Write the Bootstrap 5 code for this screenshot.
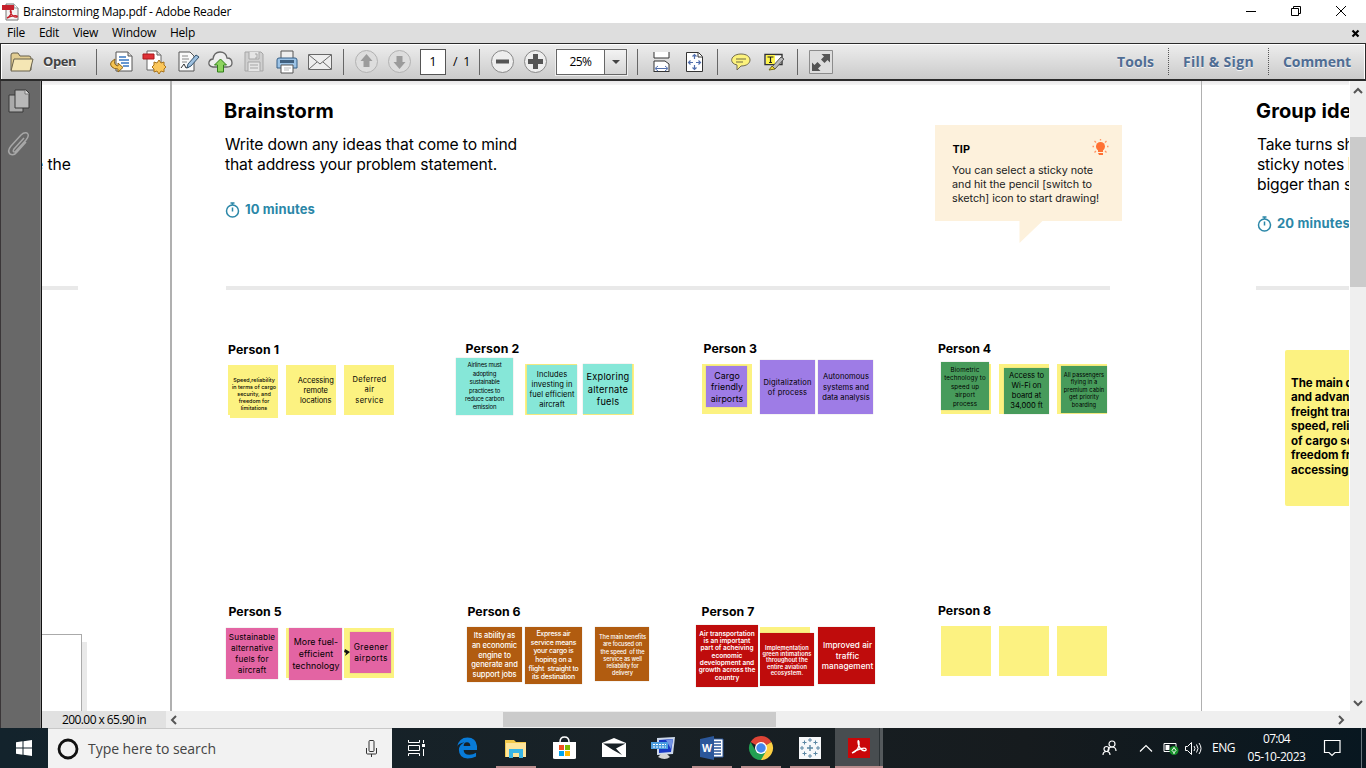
<!DOCTYPE html>
<html lang="en">
<head>
<meta charset="utf-8">
<title>Brainstorming Map.pdf - Adobe Reader</title>
<link href="https://cdn.jsdelivr.net/npm/bootstrap@5.3.0/dist/css/bootstrap.min.css" rel="stylesheet">
<script src="https://cdn.jsdelivr.net/npm/bootstrap@5.3.0/dist/js/bootstrap.bundle.min.js"></script>
<style>
body{width:1366px;height:768px;font-family:"Open Sans","Noto Sans",sans-serif;font-size:12px;color:#000;line-height:1}
svg{display:block;flex:none;overflow:visible}
[data-fit]{white-space:pre}
.titlebar{height:23px;padding:0 0 0 2px}
.wincontrols{padding-right:20px}
.wincontrols svg{margin-left:35px;margin-top:-2px}
.menubar{height:20px;background:#dedede;padding-left:7px;padding-right:7px}
.toolstrip{height:38px;border:1px solid #2b2b2b;border-width:1px 1px 2px 1px;background:linear-gradient(#ededed,#cbcbcb);box-shadow:inset 0 1px #fff,inset 1px 0 #fff,inset -1px 0 #fff}
.cell{width:33px;display:flex;justify-content:center;align-items:center}
.vr-line{width:1px;height:26px;background:#666;flex:none}
.dotline{width:1px;height:27px;background:repeating-linear-gradient(#555 0 1px,transparent 1px 2px);flex:none}
.task-link{font:bold 14px "Open Sans",sans-serif;color:#4f6d94;text-shadow:0 1px #f5f5f5}
.pagebox{width:26px;height:26px;border:1px solid #555;font-size:13px;background:#fff}
.zoombox{width:71px;height:26px;border:1px solid #666;background:#fff;box-shadow:0 0 0 1px #eee}
.zoomarrow{width:22px;border-left:1px solid #666;background:linear-gradient(#f3f3f3,#d5d5d5)}
.middle{height:647px}
.navpane{width:42px;background:#686868;border-left:1px solid #3a3638;border-right:1px solid #111;box-shadow:inset -1px 0 #8a8a8a;padding:8px 0 0 7px}
.viewer{width:1308px}
.paper{height:630px;width:1307px;background:#fff}
.board{left:-42px;top:-81px;width:1366px;height:768px}
.board>*{position:absolute}
.nova{font-family:Inter,sans-serif;white-space:pre}
.h-big{font-size:20px;font-weight:700;line-height:24px}
.para{font-size:15.700px;line-height:20px}
.mins{font-size:13px;font-weight:700;line-height:16px;color:#2b87a8}
.plabel{font:700 12.300px/16px Inter,sans-serif;white-space:pre}
.rule-line{height:4px;background:#e9e9e9}
.frame-edge{width:2px;background:#b0b0b0}
.tipbox{background:#fdf1dc}
.tiptext{font-size:10.800px;line-height:14px;color:#222}
.ntext{left:0;white-space:pre;text-align:center;font-family:Inter,sans-serif}
.n-y{background:#fcf281}.n-t{background:#86e7d8}.n-p{background:#9e7ce6}.n-g{background:#479b5b}
.n-k{background:#e364a3}.n-b{background:#b15c10;color:#fff}.n-r{background:#bf0c0c;color:#fff}
.edge{box-shadow:0 0 1px rgba(150,130,120,.5)}
.statusbar{height:17px;background:#efefef}
.pagesize{width:124px;background:#e1e1e1;padding-left:20px}
.hthumb{width:273px;height:15px;background:#cbcbcb}
.vscroll{width:16px;background:#efefef}
.vthumb{height:150px;background:#cbcbcb}
.taskbar{height:40px;background:linear-gradient(90deg,#13232c,#182126 45%,#161b1e 75%,#081720)}
.searchbox{width:344px;background:#f2f2f2;border-top:1px solid #c8c8c8}
.slot{width:49px;position:relative;display:flex;align-items:center;justify-content:center}
.running::after{content:"";position:absolute;bottom:0;left:4px;width:40px;height:2px;background:#ba8e8e}
.current{background:linear-gradient(90deg,#484d50 44px,#2c3235 44px 45px,#54595c 45px 48px,transparent 48px)}
.current::after{left:0;width:48px}
.tray{color:#fff}
</style>
</head>
<body class="overflow-hidden bg-white d-flex flex-column">
<header class="titlebar d-flex align-items-center">
  <svg width="17" height="18" viewBox="0 0 17 18"><path d="M4 1h8l4 4v12H4z" fill="#f3f3f3" stroke="#777"/><path d="M12 1v4h4" fill="#fff" stroke="#999"/><path d="M0 2h12v5H0z" fill="#c5202b"/><path d="M5 15c3-1 5-5 4-7s-1 3 2 5 5 1 4 0-6 0-10 2" fill="none" stroke="#c5202b" stroke-width="1.4"/></svg>
  <span class="ms-1" data-fit="208">Brainstorming Map.pdf - Adobe Reader</span>
  <div class="wincontrols d-flex ms-auto align-items-center">
    <svg width="10" height="10"><path d="M0 5.5h10" stroke="#000"/></svg>
    <svg width="10" height="10" fill="none" stroke="#000"><path d="M.5 2.5h7v7h-7zM2.500 2V.5h7v7H8"/></svg>
    <svg width="10" height="10" stroke="#000"><path d="M0 0l10 10M10 0L0 10"/></svg>
  </div>
</header>
<nav class="menubar d-flex align-items-center">
  <span data-fit="18">File</span><span style="margin-left:14px" data-fit="20">Edit</span><span style="margin-left:14px" data-fit="25">View</span><span style="margin-left:14px" data-fit="44">Window</span><span style="margin-left:14px" data-fit="25">Help</span>
  <svg class="ms-auto" width="7" height="7" stroke="#000" stroke-width="2.2"><path d="M.5.5l6 6M6.500.5l-6 6"/></svg>
</nav>
<div class="toolstrip d-flex align-items-center">
  <svg style="margin-left:9px" width="24" height="20" viewBox="0 0 24 20"><path d="M1 18V3q0-2 2-2h5l2 3h9q2 0 2 2v12z" fill="#e2cd92" stroke="#67604c"/><path d="M4 7h19l-3 12H1z" fill="#f5e6b4" stroke="#67604c"/></svg>
  <span class="fw-bold" style="margin-left:9px;color:#444;font-size:13px;text-shadow:0 1px #fff" data-fit="33">Open</span>
  <i class="vr-line" style="margin-left:20px"></i>
  <div class="d-flex" style="margin-left:8px">
    <div class="cell"><svg width="23" height="22"><path d="M6 1h12l4 4v15H6z" fill="#fff" stroke="#555"/><path d="M18 1v4h4" fill="#ddd" stroke="#555"/><path d="M9 6h7M9 9h10M11 12h8M13 15h6" stroke="#3977c1" stroke-width="1.3"/><path d="M5 8q-7 4-3 8 2 2 6 2v3l5-4.500L8 12v3q-5-1-3-7" fill="#f5c453" stroke="#8d6419"/></svg></div>
    <div class="cell"><svg width="23" height="24"><path d="M4 1h10l4 4v15H4z" fill="#fff" stroke="#666"/><path d="M14 1v4h4" fill="#ddd" stroke="#666"/><path d="M0 4h11v5H0z" fill="#df3036" stroke="#a9191d"/><path d="M16 10l2 3 3-1v3l2 2-2 2v3l-3-1-2 3-2-3-3 1v-3l-2-2 2-2v-3l3 1z" fill="#fbc75b" stroke="#a7731c"/></svg></div>
    <div class="cell"><svg width="22" height="22"><path d="M2 1h11l4 4v15H2z" fill="#f9f9f9" stroke="#555"/><path d="M5 5h6M5 8h7M5 11h5" stroke="#888"/><path d="M4 17l3-4 2 4 3-1" stroke="#333" fill="none"/><path d="M11 13l8-9 3 2-8 9-4 2z" fill="#9ec0df" stroke="#34536e"/></svg></div>
    <div class="cell"><svg width="25" height="22"><path d="M5 16q-5-1-4-5 1-3 4-3 1-7 7-7 6 0 7 6 5 0 5 5 0 4-5 4z" fill="#eee" stroke="#666" stroke-width="1.3"/><path d="M12.500 8l6 6h-3v7h-6v-7h-3z" fill="#8ed45f" stroke="#31801a"/></svg></div>
    <div class="cell"><svg width="20" height="21" fill="none" stroke="#a5a5a5"><path d="M1 1h16l2 2v17H1z" fill="#d0d0d0"/><path d="M5 1v7h10V1M4 20v-9h12v9" fill="#e5e5e5"/><path d="M11 3h2v4h-2M6 14h8M6 17h8"/></svg></div>
    <div class="cell"><svg width="22" height="24"><path d="M5 1h12v9H5z" fill="#eee" stroke="#555"/><path d="M1 10q0-2 2-2h16q2 0 2 2v8H1z" fill="#9cc3e6" stroke="#345e86"/><path d="M4 10h14v3H4z" fill="#416180"/><path d="M5 15h12v8H5z" fill="#fff" stroke="#555"/><path d="M8 18h7M8 20h5" stroke="#bbb"/></svg></div>
    <div class="cell"><svg width="24" height="16" fill="none" stroke="#686868"><path d="M.5.5h23v15H.5z" fill="#eee"/><path d="M1 1l11 9L23 1M1 15l8-7M23 15l-8-7"/></svg></div>
  </div>
  <i class="vr-line" style="margin-left:7px"></i>
  <div class="d-flex" style="margin-left:6px">
    <div class="cell"><svg width="23" height="23"><circle cx="11.500" cy="11.500" r="11" fill="#ddd" stroke="#b2b2b2"/><path d="M11.500 4l6 7h-3v6h-6v-6h-3z" fill="#9b9b9b"/></svg></div>
    <div class="cell"><svg width="23" height="23"><circle cx="11.500" cy="11.500" r="11" fill="#ddd" stroke="#b2b2b2"/><path d="M11.500 19l6-7h-3V6h-6v6h-3z" fill="#9b9b9b"/></svg></div>
  </div>
  <div class="pagebox d-flex align-items-center justify-content-center" style="margin-left:4px">1</div>
  <span style="margin-left:7px;font-size:12.500px;padding-top:1px" data-fit="17">/  1</span>
  <i class="vr-line" style="margin-left:9px"></i>
  <div class="d-flex" style="margin-left:6px">
    <div class="cell"><svg width="23" height="23"><circle cx="11.500" cy="11.500" r="11" fill="#eee" stroke="#888"/><path d="M5 9.500h13v4H5z" fill="#555"/></svg></div>
    <div class="cell"><svg width="23" height="23"><circle cx="11.500" cy="11.500" r="11" fill="#eee" stroke="#888"/><path d="M9 4h5v5h5v5h-5v5H9v-5H4V9h5z" fill="#555"/></svg></div>
  </div>
  <div class="zoombox d-flex" style="margin-left:4px"><span class="flex-fill text-center align-self-center"><span data-fit="22">25%</span></span><div class="zoomarrow d-flex align-items-center justify-content-center"><svg width="8" height="4"><path d="M0 0h8L4 4z" fill="#444"/></svg></div></div>
  <i class="vr-line" style="margin-left:10px"></i>
  <div class="d-flex" style="margin-left:7px">
    <div class="cell"><svg width="18" height="20" fill="none" stroke="#333"><path d="M1 0v6h15V0M1 20V9h11l4 3v8" fill="#fff"/><path d="M1 19.500h15"/><path d="M3 16.500h11M5 14l-3 2.500L5 19M12 14l3 2.500-3 2.500" stroke="#526fad"/></svg></div>
    <div class="cell"><svg width="17" height="20" fill="none"><path d="M.5.5h12l4 4v15H.5z" fill="#fff" stroke="#333"/><path d="M12 1v4h4" stroke="#333"/><path d="M8.500 3v4M8.500 13v4M3 10.500h4M10 10.500h4M6.500 4.500l2-2 2 2M6.500 15.500l2 2 2-2M4.500 8.500l-2 2 2 2M12.500 8.500l2 2-2 2" stroke="#526fad" stroke-width="1.200"/></svg></div>
  </div>
  <i class="vr-line" style="margin-left:6px"></i>
  <div class="d-flex" style="margin-left:6px">
    <div class="cell"><svg width="20" height="18"><path d="M10 1c12 0 12 12 0 12l-4 4v-5C-3 10 0 1 10 1z" fill="#fcf27c" stroke="#716b50"/><path d="M5 6h10M5 9h7" stroke="#6f6b43"/></svg></div>
    <div class="cell"><svg width="20" height="18"><path d="M1 1.500h17v10H1z" fill="#fff" stroke="#333" stroke-width="1.4"/><path d="M2 2h9v9H2z" fill="#fff54b"/><path d="M3.500 4h6M6.500 4v6M5 9.500h3" stroke="#222" stroke-width="1.2"/><path d="M8 14L17 4l3 2-9 10z" fill="#bbb" stroke="#555"/><path d="M5 17l3-4 3 3z" fill="#f3da39" stroke="#746a18"/></svg></div>
  </div>
  <i class="vr-line" style="margin-left:7px"></i>
  <svg style="margin-left:11px" width="24" height="24"><path d="M.5.5h23v23H.5z" fill="#dedede" stroke="#8c8c8c"/><path d="M12.500 4H21v8.500l-2.500-2.500-3 3-3.500-3.500 3-3zM3 12.500l2.500 2.500 3-3L12 15.500l-3 3 2.500 2.500H3z" fill="#555"/></svg>
  <div class="d-flex align-items-center ms-auto" style="padding-right:14px">
    <span class="task-link" data-fit="37">Tools</span><i class="dotline" style="margin:0 14px"></i><span class="task-link" data-fit="71">Fill &amp; Sign</span><i class="dotline" style="margin:0 14px"></i><span class="task-link" data-fit="68">Comment</span>
  </div>
</div>
<div class="middle d-flex">
  <aside class="navpane d-flex flex-column">
    <svg width="22" height="24" fill="#aaa" stroke="#393939"><path d="M1 6h14v17H1z"/><path d="M7 1h11l3 3v15H7z" fill="#b8b8b8"/><path d="M17 1v4h4" fill="#ddd" stroke="#777"/></svg>
    <svg style="margin-top:19px" width="22" height="24" fill="none" stroke="#a7a7a7" stroke-width="1.5"><path d="M16 6L6 17q-2 3 1 3L18 8q4-5 1-7-3-1-6 2L3 14q-4 5-1 8 4 2 7-2l9-10"/></svg>
  </aside>
  <main class="viewer d-flex flex-column bg-white">
    <div class="paper position-relative overflow-hidden"><div class="board position-absolute" id="board">
      <div style="left:42px;top:81px;width:1308px;height:4px;background:linear-gradient(#e9e7e9,#f5f5f5)"></div>
      <div class="frame-edge" style="left:170px;top:81px;height:630px"></div>
      <div class="frame-edge" style="left:1201px;top:81px;height:630px;width:1px"></div>
      <div style="left:82px;top:642px;width:5px;height:69px;background:#e9e9e9"></div>
      <div style="left:20px;top:634px;width:62px;height:90px;border:1px solid #aaa;background:#fff"></div>
      <div class="rule-line" style="left:42px;top:286px;width:36px"></div>
      <div class="rule-line" style="left:226px;top:286px;width:884px"></div>
      <div class="rule-line" style="left:1256px;top:286px;width:100px"></div>
      <div class="nova para" style="left:34px;top:155px" data-fit="37">e the</div>
      <div class="nova h-big" style="left:224px;top:99px" data-fit="110">Brainstorm</div>
      <div class="nova para" style="left:225px;top:135px" data-fit="292">Write down any ideas that come to mind</div>
      <div class="nova para" style="left:225px;top:155px" data-fit="272">that address your problem statement.</div>
      <svg style="left:225px;top:202px" width="15" height="16" fill="none" stroke="#2b87a8" stroke-width="1.5"><circle cx="7.500" cy="9" r="6"/><path d="M5.500 1h4M7.500 1v2M7.500 5.500v4"/></svg>
      <div class="nova mins" style="left:245px;top:201px" data-fit="70">10 minutes</div>
      <div class="tipbox" style="left:935.400px;top:125.400px;width:187px;height:96px"></div>
      <svg style="left:1019px;top:221px" width="24" height="22"><path d="M.5 0h23L.5 22z" fill="#fdf1dc"/></svg>
      <div class="nova tiptext fw-bold text-black" style="left:952.500px;top:143px" data-fit="17.5">TIP</div>
      <svg style="left:1092px;top:139px" width="17" height="17" fill="#ff7133"><circle cx="8.500" cy="7.500" r="4.500"/><path d="M6 10h5v3H6zM6 14h5v2H7z"/><path d="M8.500 0v1.500M2.500 2l1.500 1.500M14.500 2L13 3.500M.5 7.500h1.500M15 7.500h1.500M2.500 13.500L4 12M14.500 13.500L13 12" stroke="#ff9565" stroke-width="1.3"/></svg>
      <div class="nova tiptext" style="left:952px;top:164px" data-fit="141">You can select a sticky note</div>
      <div class="nova tiptext" style="left:952px;top:178px" data-fit="140">and hit the pencil [switch to</div>
      <div class="nova tiptext" style="left:952px;top:192px" data-fit="147">sketch] icon to start drawing!</div>
      <div class="nova h-big" style="left:1256px;top:99px" data-fit="119">Group ideas</div>
      <div class="nova para" style="left:1257px;top:135px" data-fit="133">Take turns sharing</div>
      <div class="nova para" style="left:1257px;top:155px" data-fit="87">sticky notes</div>
      <div class="nova para" style="left:1257px;top:175px" data-fit="107">bigger than six</div>
      <div style="left:1348px;top:157px;width:2px;height:13px;background:#fdecb5"></div>
      <svg style="left:1257px;top:216px" width="15" height="16" fill="none" stroke="#2b87a8" stroke-width="1.5"><circle cx="7.500" cy="9" r="6"/><path d="M5.500 1h4M7.500 1v2M7.500 5.500v4"/></svg>
      <div class="nova mins" style="left:1277px;top:215px" data-fit="73">20 minutes</div>
      <div class="n-y" style="left:1285px;top:350px;width:70px;height:156px;border-radius:2px"></div>
      <div class="nova fw-bold" style="left:1291px;top:375.500px;font-size:11.500px;line-height:14.600px">The main drivers
and advantages
freight transport
speed, reliability
of cargo security
freedom from
accessing remote</div>
      <svg style="left:344px;top:649px;z-index:5" width="7" height="7"><path d="M1 0l5 3-5 4 1-3-2-1z" fill="#111"/></svg>
    </div></div>
    <footer class="statusbar d-flex align-items-center">
      <div class="pagesize h-100 d-flex align-items-center"><span data-fit="84">200.00 x 65.90 in</span></div>
      <svg style="margin-left:4px" width="7" height="8" fill="none" stroke="#555" stroke-width="2"><path d="M6 0L2 4l4 4"/></svg>
      <div class="hthumb" style="margin-left:326px"></div>
      <svg style="margin-left:562px" width="7" height="8" fill="none" stroke="#555" stroke-width="2"><path d="M1 0l4 4-4 4"/></svg>
    </footer>
  </main>
  <div class="vscroll d-flex flex-column">
    <svg style="margin:7px 4px 44px" width="8" height="5" fill="none" stroke="#555" stroke-width="2"><path d="M0 5l4-4 4 4"/></svg>
    <div class="vthumb"></div>
    <svg style="margin:414px 4px 0" width="8" height="5" fill="none" stroke="#555" stroke-width="2"><path d="M0 0l4 4 4-4"/></svg>
  </div>
</div>
<footer class="taskbar d-flex">
  <div class="d-flex align-items-center justify-content-center" style="width:48px"><svg width="16" height="16" fill="#fff"><path d="M0 2.200L6.500 1.300v6.200H0zM7.500 1.200L16 0v7.500H7.500zM0 8.500h6.500v6.200L0 13.800zM7.500 8.500H16V16l-8.500-1.200z"/></svg></div>
  <div class="searchbox d-flex align-items-center">
    <svg style="margin-left:9px" width="22" height="22"><circle cx="11" cy="11" r="9" fill="none" stroke="#111" stroke-width="2.800"/></svg>
    <span style="margin-left:9px;font-size:14px;color:#444" data-fit="128">Type here to search</span>
    <svg class="ms-auto" style="margin-right:15px" width="11" height="17" fill="none" stroke="#333"><rect x="3" y=".5" width="5" height="11" rx="1"/><path d="M.5 8v5q0 1 1 1h8q1 0 1-1V8M5.500 14v3"/></svg>
  </div>
  <div class="slot" style="margin-right:2px"><svg width="17" height="16" fill="none" stroke="#fff"><path d="M.5 0v2.500h11V0M.5 5.500h11v5H.5zM.5 16v-2.500h11V16M15.500 0v3M15.500 9v7"/><path d="M14 4h3v3h-3z" fill="#fff" stroke="none"/></svg></div>
  <div class="slot"><svg style="margin-right:2px" width="20" height="22" viewBox="0 0 21 22"><path d="M0 10Q2 0 11 0q9 0 10 9v4H7q0 5 6 5 4 0 7-2v4q-4 2-9 2-9-1-9-9 0-5 6-8-7 1-8 5zM7 9h7q0-4-3.500-4T7 9z" fill="#087bd8" fill-rule="evenodd"/></svg></div>
  <div class="slot running"><svg style="margin-right:1px" width="22" height="19"><path d="M0 1h9l2 2h10v15H0z" fill="#f2c84b"/><path d="M1 4h20v14H1z" fill="#fee59c"/><path d="M4 19v-9h14v9h-4v-5H8v5z" fill="#39b5e5"/></svg></div>
  <div class="slot"><svg style="margin-right:2px" width="23" height="24"><path d="M7 6q0-5 4.500-5T16 6" fill="none" stroke="#fff" stroke-width="1.500"/><path d="M0 6h23v16q0 1-2 1H2q-2 0-2-1z" fill="#fff"/><path d="M6 9h5v5H6z" fill="#f25022"/><path d="M12 9h5v5h-5z" fill="#7fba00"/><path d="M6 15h5v5H6z" fill="#00a4ef"/><path d="M12 15h5v5h-5z" fill="#ffb900"/></svg></div>
  <div class="slot"><svg style="margin-right:1px" width="24" height="20"><path d="M0 5l12-5 12 5v14H0z" fill="#fff"/><path d="M1 5.500h22.500L14 10.500l6 6.500-9-5z" fill="#182126"/></svg></div>
  <div class="slot"><svg style="margin-right:2px" width="24" height="23"><path d="M6 1l18-1-2 17-16 1z" fill="#cdd8ea"/><path d="M8 3l14-1-2 13-12 1z" fill="#1839c4"/><path d="M15 3l7-1-2 10z" fill="#7394e5"/><path d="M10 17h6l3 3q-5 4-12 0z" fill="#d4d4d4"/><path d="M0 5h17v7H0z" fill="#4c9de0"/><path d="M2 7.500h13M2 10h13" stroke="#fff" stroke-dasharray="2 1"/></svg></div>
  <div class="slot running"><svg style="margin-right:1px" width="24" height="24"><path d="M12 3h11v18H12z" fill="#fff" stroke="#2b579a"/><path d="M14 6h7M14 9h7M14 12h7M14 15h7M14 18h7" stroke="#2b579a" stroke-width="1.300"/><path d="M0 3l14-3v24L0 21z" fill="#2b579a"/><text x="2" y="16" font-family="Open Sans" font-weight="700" font-size="11" textLength="10" lengthAdjust="spacingAndGlyphs" fill="#fff">W</text></svg></div>
  <div class="slot running"><svg style="margin-right:1px" width="24" height="24" viewBox="0 0 24 24"><path d="M12 12L1.600 6A12 12 0 0 1 22.400 6z" fill="#de4436"/><path d="M12 12l10.400-6A12 12 0 0 1 12 24z" fill="#fdd043"/><path d="M12 12l5.200 3L12 24A12 12 0 0 1 1.600 6l5.200 9z" fill="#22a052"/><circle cx="12" cy="12" r="6" fill="#fff"/><circle cx="12" cy="12" r="4.700" fill="#4587ed"/></svg></div>
  <div class="slot running"><svg style="margin-right:2px" width="22" height="22"><path d="M0 0h22v22H0z" fill="#f7f8fa"/><g stroke="#5a86a3"><path d="M11 8v6M8 11h6" stroke-width="1.400"/><path d="M11 1v4M9 3h4M11 17v4M9 19h4M1 11h4M3 9v4M17 11h4M19 9v4M5.500 3.500v4M3.500 5.500h4M16.500 3.500v4M14.500 5.500h4M5.500 14.500v4M3.500 16.500h4M16.500 14.500v4M14.500 16.500h4"/></g></svg></div>
  <div class="slot running current"><svg style="margin-right:1px" width="22" height="20"><path d="M0 0h22v20H0z" fill="#c90709"/><path d="M4 15c5-1 8-7 7-11s-2 2 1 6 7 3 6 1-9 0-14 4" fill="none" stroke="#fff" stroke-width="1.300"/></svg></div>
  <div class="tray ms-auto d-flex align-items-center">
    <svg width="15" height="16" fill="none" stroke="#fff" stroke-width="1.200"><circle cx="10" cy="4" r="3"/><path d="M6 11q0-4 4-4t4 4"/><circle cx="4.500" cy="9" r="2.500"/><path d="M1 15q0-3.500 3.500-3.500T8 15"/></svg>
    <svg style="margin-left:23px" width="12" height="7" fill="none" stroke="#fff" stroke-width="1.200"><path d="M0 6.500l6-6 6 6"/></svg>
    <svg style="margin-left:11px" width="16" height="13"><path d="M1 1.500h12v8H1z" fill="none" stroke="#fff"/><path d="M2.500 3h4v5h-4z" fill="#fff"/><circle cx="11" cy="8.500" r="4.500" fill="#16912a"/><path d="M11 5.500l2 3-2 2-2-2zM11 10v2" fill="none" stroke="#fff"/></svg>
    <svg style="margin-left:6px" width="17" height="13" fill="none" stroke="#fff"><path d="M.5 4.500h2l4-4v12l-4-4h-2zM9 4q2 2.500 0 5M11.500 2.500q3 4 0 8M14 1q4 5.500 0 11"/></svg>
    <span style="margin-left:10px" data-fit="23">ENG</span>
    <div class="text-center" style="margin-left:12px;line-height:18px;width:59px"><span data-fit="27">07:04</span><br><span data-fit="58">05-10-2023</span></div>
    <svg style="margin-left:18px" width="17" height="16" fill="none" stroke="#fff" stroke-width="1.200"><path d="M.5.5h15.500v12H11l-3 3-3-3H.5z"/></svg>
    <i style="width:1px;height:40px;background:#68757c;margin:0 4px 0 20px"></i>
  </div>
</footer>
<script>
// left, top, width, height, colour, then optionally:
// font size, line height, centre y of first line, centre x, widest line, weight, lines
const notes=[
[228,365,50,50,'y'],[230,365,48,53,'y',5.4,7,380.4,254,44,500,'Speed,reliability|in terms of cargo|security, and|freedom for|limitations'],
[286,365,50,50,'y',7.5,9.7,381,315.7,36,400,'Accessing|remote|locations'],
[344,365,50,50,'y',7.5,10.5,380,369.5,34,400,'Deferred|air|service'],
[456.4,358,56.5,56.5,'t',6,8.4,365.500,484.5,39,400,'Airlines must|adopting|sustainable|practices to|reduce carbon|emission'],
[525,364,52,50.5,'y'],[527,365,50,49.4,'t',7.5,10,375,552,45,400,'Includes|investing in|fuel efficient|aircraft'],
[583,364,50.5,50.5,'y'],[583,364.4,49,49.5,'t',9.2,12.4,377.500,608,43,400,'Exploring|alternate|fuels'],
[702,364,50,50,'y'],[706,366,41,41,'p',8.8,11.6,375.500,727,32.5,400,'Cargo|friendly|airports'],
[760.4,360,54.5,54.4,'p',7.5,10,383,787.5,48,400,'Digitalization|of process'],
[818.4,360,54.5,54.4,'p',7.6,10.4,377.500,846,47.5,400,'Autonomous|systems and|data analysis'],
[941,364,50,50,'y'],[941,362,48,47.5,'g',6.2,8.5,370,965,41.5,400,'Biometric|technology to|speed up|airport|process'],
[999,364,50,50,'y'],[1004,368,45,45.5,'g',7.6,10,376.2,1026.5,35,400,'Access to|Wi-Fi on|board at|34,000 ft'],
[1057,364,50,50,'y'],[1061,366,46,47,'g',5.7,7.6,374.5,1084,40.5,400,'All passengers|flying in a|premium cabin|get priority|boarding'],
[226.4,628,51.5,51,'k',8.2,11,637.700,252,46.5,400,'Sustainable|alternative|fuels for|aircraft'],
[286,628,50,50,'y'],[289.4,628,53,52.4,'k',8.8,12,642.4,316,47,400,'More fuel-|efficient|technology'],
[344,628,50,50,'y'],[350,632,41,41,'k',8.4,11,647.700,371,34.5,400,'Greener|airports'],
[467,627,55,54.5,'b',7.5,9.6,636.2,494.5,46.5,500,'Its ability as|an economic|engine to|generate and|support jobs'],
[525,627,57.4,57,'b',6.9,8.6,634.600,553.5,50,500,'Express air|service means|your cargo is|hoping on a|flight  straight to|its destination'],
[595,627,54,53.5,'b',5.7,7.2,636.7,622.5,47,500,'The main benefits|are focused on|the speed  of the|service as well|reliability for|delivery'],
[696.4,624.5,61.4,62,'r',6.5,7.35,634.4,727,56.5,600,'Air transportation|is an important|part of acheiving|economic|development and|growth across the|country'],
[760,627,50,50,'y'],[760.4,633,53.5,53.4,'r',5.7,6.3,648,787,49,600,'Implementation|green intimations|throughout the|entire aviation|ecosystem.'],
[818.4,627,57,57,'r',8.2,10.5,645.500,847.5,51.5,500,'Improved air|traffic|management'],
[941,626,50,50,'y'],[999,626,50,50,'y'],[1057,626,50,50,'y']];
const labels=[[228,342,51],[465.5,341,54],[703.5,341,53.5],[938,341,53],[228.5,604,53],[467.5,604,53],[701.5,604,53],[938,603,53]];
const board=document.getElementById('board');
const place=(el,x,y)=>{el.style.left=x+'px';el.style.top=y+'px';board.append(el);return el};
const natural=el=>{const r=document.createRange();r.selectNodeContents(el);return r.getBoundingClientRect().width};
labels.forEach(([x,y,w],i)=>{
  const d=document.createElement('div');d.className='plabel';d.textContent='Person '+(i+1);d.dataset.fit=w;place(d,x,y)});
notes.forEach(([x,y,w,h,c,fs,lh,cy,cx,tw,wt,text])=>{
  const d=document.createElement('div');d.className='n-'+c+(c!='y'?' edge':'');
  place(d,x,y);d.style.width=w+'px';d.style.height=h+'px';
  if(!text)return;
  const t=document.createElement('div');t.className='ntext n-'+c;t.style.background='none';
  t.style.fontSize=fs+'px';t.style.lineHeight=lh+'px';t.style.fontWeight=wt;
  t.textContent=text.replace(/\|/g,'\n');place(t,0,cy-lh/2);
  const lines=text.split('|'),span=document.createElement('span');
  let n=1,max=0;span.style.cssText='visibility:hidden;white-space:pre;position:absolute';t.append(span);
  lines.forEach(l=>{span.textContent=l;const s=natural(span);if(s>max){max=s;n=l.length}});
  span.remove();t.style.letterSpacing=(tw-max)/n+'px';
  t.style.left=cx-natural(t)/2+'px';
});
// tracks each marked run of text to its design width
document.querySelectorAll('[data-fit]').forEach(el=>{
  el.style.letterSpacing=(el.dataset.fit-natural(el))/el.textContent.length+'px'});
</script>
</body>
</html>
